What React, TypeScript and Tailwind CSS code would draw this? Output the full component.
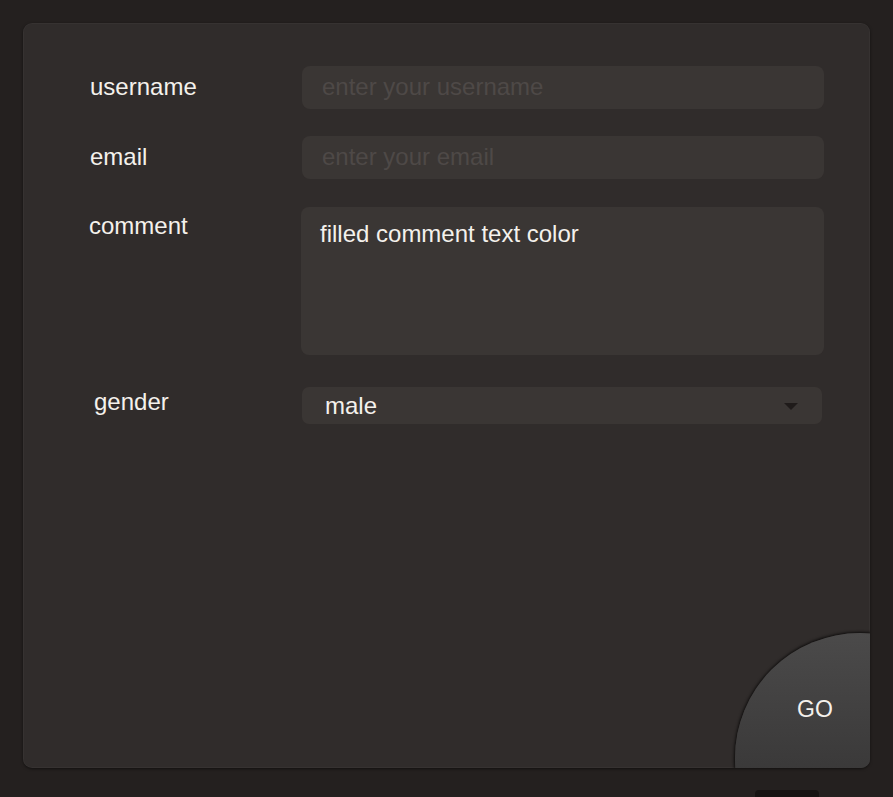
export default function App() {
  return (
    <div
      className="min-h-[797px] bg-[#24201f] px-[23px] pt-[23px] overflow-hidden"
      style={{ fontFamily: '"Liberation Sans", Arial, sans-serif' }}
    >
      <form className="relative h-[745px] overflow-hidden rounded-[9px] bg-[#302c2b] pl-[66px] pr-[46px] pt-[43px] shadow-[0_1px_3px_rgba(0,0,0,0.5),inset_0_0_0_1px_rgba(255,255,255,0.03)]">
        <div className="flex items-center">
          <label htmlFor="username" className="w-[213px] pb-[2px] pl-[1px] text-[24px] text-[#f4f1ec]">
            username
          </label>
          <input
            id="username"
            type="text"
            placeholder="enter your username"
            className="h-[43px] flex-1 rounded-[8px] bg-[#3a3634] px-[20px] pb-[1px] text-[24px] text-[#f4f1ec] placeholder:text-[#4e4947] outline-none"
          />
        </div>

        <div className="mt-[27px] flex items-center">
          <label htmlFor="email" className="w-[213px] pb-[2px] pl-[1px] text-[24px] text-[#f4f1ec]">
            email
          </label>
          <input
            id="email"
            type="email"
            placeholder="enter your email"
            className="h-[43px] flex-1 rounded-[8px] bg-[#3a3634] px-[20px] pb-[1px] text-[24px] text-[#f4f1ec] placeholder:text-[#4e4947] outline-none"
          />
        </div>

        <div className="mt-[28px] flex items-start">
          <label htmlFor="comment" className="w-[212px] pt-[1px] text-[24px] text-[#f4f1ec]">
            comment
          </label>
          <textarea
            id="comment"
            defaultValue="filled comment text color"
            className="block h-[148px] flex-1 resize-none rounded-[8px] bg-[#3a3634] px-[19px] pt-[9px] text-[24px] text-[#f4f1ec] outline-none"
          />
        </div>

        <div className="mt-[32px] flex items-center">
          <label htmlFor="gender" className="w-[213px] pb-[7px] pl-[5px] text-[24px] leading-[28px] text-[#f4f1ec]">
            gender
          </label>
          <div className="relative mr-[2px] flex-1">
            <select
              id="gender"
              defaultValue="male"
              className="block h-[37px] w-full appearance-none rounded-[7px] bg-[#3a3634] pl-[23px] text-[24px] text-[#f4f1ec] outline-none"
            >
              <option value="male">male</option>
              <option value="female">female</option>
            </select>
            <span className="pointer-events-none absolute right-[24px] top-[16px] h-0 w-0 border-x-[7px] border-t-[7px] border-x-transparent border-t-[#1f1b1a]" />
          </div>
        </div>

        <button
          type="submit"
          className="absolute left-[712px] top-[610px] flex h-[250px] w-[250px] items-start rounded-full bg-gradient-to-b from-[#4b4a4a] to-[#2d2c2c] pl-[62px] pt-[59px] text-left text-[23px] text-[#f4f1ec] shadow-[0_0_3px_1px_rgba(0,0,0,0.75)]"
        >
          GO
        </button>
      </form>
      <div className="ml-[732px] mt-[22px] h-[10px] w-[64px] rounded-[4px] bg-[#161312]" />
    </div>
  );
}
